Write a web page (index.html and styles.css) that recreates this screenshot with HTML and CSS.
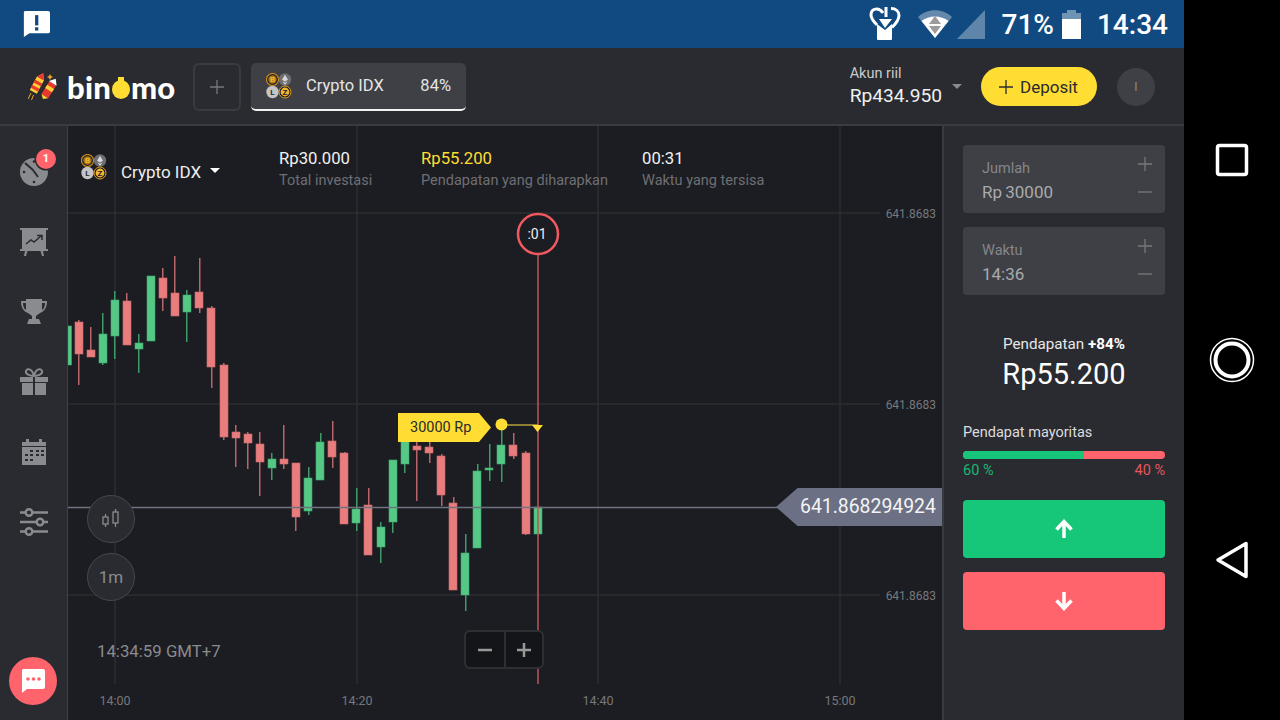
FILE: index.html
```html
<!DOCTYPE html>
<html lang="en">
<head>
    <meta charset="UTF-8">
    <meta name="viewport" content="width=device-width, initial-scale=1.0">
    <title>Binomo</title>
    <link rel="stylesheet" href="styles.css">
</head>
<body>

    <div class="screen">

        <!-- android status bar -->
        <div class="status-bar">
            <svg class="status-note" width="28" height="28" viewBox="0 0 30 30">
                <path d="M3 1h25a2 2 0 0 1 2 2v20a2 2 0 0 1-2 2H8l-6 4V3a2 2 0 0 1 1-2z" fill="#fff"/>
                <rect x="14" y="5.500" width="3.500" height="11" fill="#114a80"/>
                <rect x="14" y="18.500" width="3.500" height="3.500" fill="#114a80"/>
            </svg>
            <div class="status-right">
                <svg width="32" height="34" viewBox="0 0 32 34">
                    <path d="M14 6C10 0 2 1 2 8c0 4 3 7 6 10M17 0v10M22 1.500c5 0 8 3 8 7 0 4-3 8-7 12" fill="none" stroke="#fff" stroke-width="3"/>
                    <path d="M8 17l8 6 7-6v15a1 1 0 0 1-1 1H9a1 1 0 0 1-1-1z" fill="#fff"/>
                    <path d="M10 12h13l-7 9z" fill="#fff"/>
                </svg>
                <svg class="status-wifi" width="36" height="30" viewBox="0 0 36 30">
                    <path d="M18 29L1 8C10-1 26-1 35 8z" fill="#fff" fill-opacity=".35"/>
                    <path d="M18 29L4.500 12C12 6 24 6 31.500 12z" fill="#fff"/>
                    <path d="M18 7l6 8H12zM12 17h12l-6 8z" fill="#9b9b9b"/>
                </svg>
                <svg width="28" height="29" viewBox="0 0 28 29">
                    <path d="M0 29L28 0v29z" fill="#fff" fill-opacity=".33"/>
                </svg>
                <span class="status-text status-batt">71%</span>
                <svg class="status-battery" width="19" height="29" viewBox="0 0 19 29">
                    <path d="M5 0h9v3h5v9H0V3h5z" fill="#fff" fill-opacity=".4"/>
                    <rect y="9" width="19" height="20" fill="#fff"/>
                </svg>
                <span class="status-text status-time">14:34</span>
            </div>
        </div>

        <!-- top bar -->
        <header class="topbar">
            <div class="logo">
                <svg class="rockets" width="30" height="30" viewBox="0 0 30 30">
                    <g transform="rotate(28 10 11)">
                        <path d="M10 0l4 6v15H6V6z" fill="#ffcf33"/>
                        <path d="M10 0l4 6H6zM6 9.500h8v3H6zM6 15.500h8v3H6z" fill="#e8392f"/>
                    </g>
                    <path d="M3 21l-3 6M5.500 23l-2 5" stroke="#f5a623" stroke-width="1"/>
                    <g transform="rotate(32 20 19)">
                        <path d="M16 10h8v15h-8z" fill="#e8392f"/>
                        <path d="M16 14h8v4h-8zM16 25h8l-4 3.500z" fill="#ffcf33"/>
                        <path d="M15.500 10L20 4.500l4.500 5.500z" fill="#fff"/>
                    </g>
                    <path d="M22 2l1 2 2 1-2 1-1 2-1-2-2-1 2-1z" fill="#f5a623"/>
                </svg>
                <span class="logo-text">bin<span class="logo-o">o</span>mo</span>
            </div>
            <button class="tab-add">
                <svg width="16" height="16" viewBox="0 0 16 16"><path d="M8 1v14M1 8h14" stroke="#77787c" stroke-width="1.300"/></svg>
            </button>
            <div class="tab">
                <svg class="tab-coins" width="26" height="26" viewBox="0 0 26 26">
                    <circle cx="6.500" cy="6.500" r="6" fill="#1c1d22" stroke="#c98a1e" stroke-width="1.200"/>
                    <circle cx="6.500" cy="6.500" r="4.200" fill="#a8761c"/>
                    <text x="6.500" y="9.200" class="coin-letter" fill="#f2b632">B</text>
                    <circle cx="19" cy="6.500" r="6.200" fill="#6d6e72"/>
                    <path d="M19 1.800l-3 5 3 1.700 3-1.700zM16.400 8.200l2.600 3.800 2.600-3.800-2.600 1.500z" fill="#d8d8da"/>
                    <circle cx="6.500" cy="19" r="6.200" fill="#c4c5c7"/>
                    <text x="6.500" y="22.200" class="coin-letter" fill="#2a2b30">L</text>
                    <circle cx="19" cy="19" r="6" fill="#1c1d22" stroke="#e0a021" stroke-width="1"/>
                    <circle cx="19" cy="19" r="4.400" fill="#f2b632"/>
                    <text x="19" y="22" class="coin-letter" fill="#1c1d22">Z</text>
                </svg>
                <span class="tab-name">Crypto IDX</span>
                <span class="tab-pct">84%</span>
            </div>
            <div class="account">
                <div class="account-info">
                    <div class="account-type">Akun riil</div>
                    <div class="account-balance">Rp434.950</div>
                </div>
                <span class="caret caret-grey"></span>
            </div>
            <button class="deposit">
                <svg width="16" height="16" viewBox="0 0 16 16"><path d="M8 1v14M1 8h14" stroke="#2a2b30" stroke-width="1.300"/></svg>
                Deposit
            </button>
            <div class="avatar">I</div>
        </header>

        <div class="main">

            <!-- left menu -->
            <nav class="sidebar">
                <div class="side-item">
                    <svg width="30" height="30" viewBox="0 0 30 30">
                        <circle cx="15" cy="15" r="14" fill="#8a8b8f"/>
                        <path d="M14 13L6 6M14 13l5 7" stroke="#2a2b30" stroke-width="2"/>
                        <circle cx="15" cy="25" r="1.300" fill="#2a2b30"/><circle cx="5" cy="15" r="1.300" fill="#2a2b30"/><circle cx="15" cy="4.500" r="1.300" fill="#2a2b30"/>
                    </svg>
                    <span class="side-badge">1</span>
                </div>
                <div class="side-item">
                    <svg width="28" height="28" viewBox="0 0 28 28">
                        <path d="M0 0h28v2H0zM0 21h28v2H0zM5 23h2.500l-1.500 5H4zM20.500 23H23l1 5h-2z" fill="#8a8b8f"/>
                        <path d="M2 2h24v19H2z" fill="#8a8b8f"/>
                        <path d="M6 16l5-4 3 2 7-6M17 7.500h5v4.500" fill="none" stroke="#2a2b30" stroke-width="1.500"/>
                    </svg>
                </div>
                <div class="side-item">
                    <svg width="28" height="28" viewBox="0 0 28 28">
                        <path d="M6 1h16v2h5c0 6-2 10-7 12-1 1-3 2-4 3v3h3l2 5H7l2-5h3v-3c-1-1-3-2-4-3C3 13 1 9 1 3h5zM3 5c0 3 1 6 3 7V5zm19 0v7c2-1 3-4 3-7z" fill="#8a8b8f"/>
                    </svg>
                </div>
                <div class="side-item">
                    <svg width="28" height="28" viewBox="0 0 28 28">
                        <path d="M14 8C10 8 5 6 6 3c1-3 6-3 8 5zM14 8c4 0 9-2 8-5-1-3-6-3-8 5z" fill="none" stroke="#8a8b8f" stroke-width="2"/>
                        <path d="M0 9h13v5H0zM15 9h13v5H15zM2 15h11v12H2zM15 15h11v12H15z" fill="#8a8b8f"/>
                    </svg>
                </div>
                <div class="side-item">
                    <svg width="26" height="26" viewBox="0 0 26 26">
                        <path d="M1 3h4V0h3v3h10V0h3v3h4v23H1z" fill="#8a8b8f"/>
                        <path d="M1 7.500h24" stroke="#2a2b30" stroke-width="1"/>
                        <path d="M9 11h3v2H9zM15 11h3v2h-3zM20 11h3v2h-3zM4 15h3v2H4zM9 15h3v2H9zM15 15h3v2h-3zM20 15h3v2h-3zM4 20h3v2H4zM9 20h3v2H9z" fill="#2a2b30"/>
                    </svg>
                </div>
                <div class="side-item">
                    <svg width="28" height="28" viewBox="0 0 28 28" fill="none" stroke="#8a8b8f" stroke-width="2.400">
                        <path d="M0 4.500h5M13 4.500h15M0 14h16M24 14h4M0 23.500h5M13 23.500h15"/>
                        <circle cx="9" cy="4.500" r="3.300"/><circle cx="20" cy="14" r="3.300"/><circle cx="9" cy="23.500" r="3.300"/>
                    </svg>
                </div>
                <button class="chat">
                    <svg width="26" height="26" viewBox="0 0 26 26">
                        <path d="M3 1h20a2 2 0 0 1 2 2v16a2 2 0 0 1-2 2H7l-5 4V2a2 2 0 0 1 1-1z" fill="#fff"/>
                        <circle cx="8" cy="11" r="1.800" fill="#ff646c"/><circle cx="13.500" cy="11" r="1.800" fill="#ff646c"/><circle cx="19" cy="11" r="1.800" fill="#ff646c"/>
                    </svg>
                </button>
            </nav>

            <!-- chart -->
            <section class="chart">
                <svg class="chart-canvas" width="874" height="594" viewBox="68 126 874 594">
                    <g class="grid">
                        <path d="M115 126V684M357 126V684M598 126V684M840 126V684"/>
                        <path d="M68 213H880M68 404H880M68 595H880"/>
                    </g>

                    <g class="candle-green"><rect class="wick" x="68" y="326" width="1" height="39"/><rect class="body" x="68" y="326" width="3.500" height="39"/></g>
                    <g class="candle-red"><rect class="wick" x="78" y="320" width="1.500" height="65"/><rect class="body" x="75" y="322" width="8" height="32"/></g>
                    <g class="candle-red"><rect class="wick" x="90" y="327" width="1.500" height="30"/><rect class="body" x="87" y="350" width="8" height="7"/></g>
                    <g class="candle-green"><rect class="wick" x="102" y="313" width="1.500" height="52"/><rect class="body" x="99" y="334" width="8" height="29"/></g>
                    <g class="candle-green"><rect class="wick" x="114" y="291" width="1.500" height="68"/><rect class="body" x="111" y="300" width="8" height="36"/></g>
                    <g class="candle-red"><rect class="wick" x="126" y="293" width="1.500" height="52"/><rect class="body" x="123" y="301" width="8" height="44"/></g>
                    <g class="candle-green"><rect class="wick" x="138" y="334" width="1.500" height="39"/><rect class="body" x="135" y="343" width="8" height="6"/></g>
                    <g class="candle-green"><rect class="body" x="147" y="276" width="8" height="65"/></g>
                    <g class="candle-red"><rect class="wick" x="162" y="268" width="1.500" height="43"/><rect class="body" x="159" y="278" width="8" height="20"/></g>
                    <g class="candle-red"><rect class="wick" x="174" y="256" width="1.500" height="60"/><rect class="body" x="171" y="293" width="8" height="23"/></g>
                    <g class="candle-green"><rect class="wick" x="186" y="290" width="1.500" height="52"/><rect class="body" x="183" y="295" width="8" height="17"/></g>
                    <g class="candle-red"><rect class="wick" x="199" y="258" width="1.500" height="55"/><rect class="body" x="195" y="292" width="8" height="16"/></g>
                    <g class="candle-red"><rect class="wick" x="211" y="306" width="1.500" height="82"/><rect class="body" x="207" y="308" width="8" height="59"/></g>
                    <g class="candle-red"><rect class="wick" x="223" y="363" width="1.500" height="77"/><rect class="body" x="220" y="365" width="8" height="72"/></g>
                    <g class="candle-red"><rect class="wick" x="235" y="425" width="1.500" height="42"/><rect class="body" x="232" y="432" width="8" height="6"/></g>
                    <g class="candle-red"><rect class="wick" x="247" y="432" width="1.500" height="37"/><rect class="body" x="244" y="434" width="8" height="9"/></g>
                    <g class="candle-red"><rect class="wick" x="259" y="432" width="1.500" height="64"/><rect class="body" x="256" y="444" width="8" height="18"/></g>
                    <g class="candle-green"><rect class="wick" x="271" y="453" width="1.500" height="27"/><rect class="body" x="268" y="459" width="8" height="9"/></g>
                    <g class="candle-red"><rect class="wick" x="283" y="425" width="1.500" height="44"/><rect class="body" x="280" y="459" width="8" height="5"/></g>
                    <g class="candle-red"><rect class="wick" x="295" y="463" width="1.500" height="68"/><rect class="body" x="292" y="463" width="8" height="54"/></g>
                    <g class="candle-green"><rect class="wick" x="308" y="467" width="1.500" height="48"/><rect class="body" x="304" y="478" width="8" height="33"/></g>
                    <g class="candle-green"><rect class="wick" x="320" y="433" width="1.500" height="47"/><rect class="body" x="316" y="442" width="8" height="38"/></g>
                    <g class="candle-red"><rect class="wick" x="332" y="421" width="1.500" height="47"/><rect class="body" x="328" y="441" width="8" height="16"/></g>
                    <g class="candle-red"><rect class="wick" x="344" y="452" width="1.500" height="72"/><rect class="body" x="340" y="453" width="8" height="71"/></g>
                    <g class="candle-green"><rect class="wick" x="356" y="488" width="1.500" height="43"/><rect class="body" x="352" y="509" width="8" height="14"/></g>
                    <g class="candle-red"><rect class="wick" x="368" y="488" width="1.500" height="67"/><rect class="body" x="364" y="505" width="8" height="50"/></g>
                    <g class="candle-green"><rect class="wick" x="380" y="522" width="1.500" height="41"/><rect class="body" x="377" y="527" width="8" height="20"/></g>
                    <g class="candle-green"><rect class="wick" x="392" y="460" width="1.500" height="73"/><rect class="body" x="389" y="460" width="8" height="62"/></g>
                    <g class="candle-green"><rect class="wick" x="404" y="440" width="1.500" height="33"/><rect class="body" x="401" y="440" width="8" height="24"/></g>
                    <g class="candle-red"><rect class="wick" x="416" y="441" width="1.500" height="60"/><rect class="body" x="413" y="446" width="8" height="4"/></g>
                    <g class="candle-red"><rect class="wick" x="429" y="441" width="1.500" height="22"/><rect class="body" x="425" y="447" width="8" height="6"/></g>
                    <g class="candle-red"><rect class="wick" x="441" y="454" width="1.500" height="52"/><rect class="body" x="437" y="456" width="8" height="39"/></g>
                    <g class="candle-red"><rect class="wick" x="453" y="497" width="1.500" height="93"/><rect class="body" x="449" y="503" width="8" height="87"/></g>
                    <g class="candle-green"><rect class="wick" x="465" y="534" width="1.500" height="77"/><rect class="body" x="461" y="553" width="8" height="42"/></g>
                    <g class="candle-green"><rect class="wick" x="477" y="464" width="1.500" height="84"/><rect class="body" x="473" y="471" width="8" height="77"/></g>
                    <g class="candle-green"><rect class="wick" x="489" y="444" width="1.500" height="37"/><rect class="body" x="485" y="468" width="8" height="2"/></g>
                    <g class="candle-green"><rect class="wick" x="501" y="430" width="1.500" height="52"/><rect class="body" x="497" y="445" width="8" height="19"/></g>
                    <g class="candle-red"><rect class="wick" x="513" y="433" width="1.500" height="26"/><rect class="body" x="509" y="445" width="8" height="11"/></g>
                    <g class="candle-red"><rect class="wick" x="525" y="451" width="1.500" height="84"/><rect class="body" x="522" y="453" width="8" height="81"/></g>
                    <g class="candle-green"><rect class="body" x="534" y="507" width="8" height="27"/></g>

                    <path class="price-line" d="M68 507.500H780"/>
                    <path class="expire-line" d="M538 254V684"/>
                    <circle class="expire-ring" cx="538" cy="234" r="20"/>
                    <path class="bet-line" d="M501 425H538"/>
                    <circle class="bet-dot" cx="501.500" cy="424.500" r="6"/>
                    <path class="bet-dot" d="M532 425h11l-5.500 7z"/>
                </svg>

                <div class="chart-head">
                    <svg class="head-coins" width="26" height="26" viewBox="0 0 26 26">
                        <circle cx="6.500" cy="6.500" r="6" fill="#1c1d22" stroke="#c98a1e" stroke-width="1.200"/>
                        <circle cx="6.500" cy="6.500" r="4.200" fill="#a8761c"/>
                        <text x="6.500" y="9.200" class="coin-letter" fill="#f2b632">B</text>
                        <circle cx="19" cy="6.500" r="6.200" fill="#6d6e72"/>
                        <path d="M19 1.800l-3 5 3 1.700 3-1.700zM16.400 8.200l2.600 3.800 2.600-3.800-2.600 1.500z" fill="#d8d8da"/>
                        <circle cx="6.500" cy="19" r="6.200" fill="#c4c5c7"/>
                        <text x="6.500" y="22.200" class="coin-letter" fill="#2a2b30">L</text>
                        <circle cx="19" cy="19" r="6" fill="#1c1d22" stroke="#e0a021" stroke-width="1"/>
                        <circle cx="19" cy="19" r="4.400" fill="#f2b632"/>
                        <text x="19" y="22" class="coin-letter" fill="#1c1d22">Z</text>
                    </svg>
                    <div class="head-name">Crypto IDX<span class="caret"></span></div>
                    <div class="stat stat-invest">
                        <div class="stat-value">Rp30.000</div>
                        <div class="stat-label">Total investasi</div>
                    </div>
                    <div class="stat stat-income">
                        <div class="stat-value stat-yellow">Rp55.200</div>
                        <div class="stat-label">Pendapatan yang diharapkan</div>
                    </div>
                    <div class="stat">
                        <div class="stat-value">00:31</div>
                        <div class="stat-label">Waktu yang tersisa</div>
                    </div>
                </div>

                <span class="expire-time">:01</span>
                <span class="level level-1">641.8683</span>
                <span class="level level-2">641.8683</span>
                <span class="level level-3">641.8683</span>
                <div class="bet-tag">30000 Rp</div>
                <div class="price-tag">641.868294924</div>

                <button class="round-btn round-type">
                    <svg width="18" height="20" viewBox="0 0 18 20" fill="none" stroke="#8a8b8f" stroke-width="1.300">
                        <rect x="1" y="8" width="5" height="7"/><path d="M3.500 5v3M3.500 15v3"/>
                        <rect x="11" y="3" width="5" height="11"/><path d="M13.500 0v3M13.500 14v4"/>
                    </svg>
                </button>
                <button class="round-btn round-time">1m</button>
                <div class="clock">14:34:59 GMT+7</div>

                <div class="zoom-box">
                    <button class="zoom-btn"><svg width="16" height="16" viewBox="0 0 16 16"><path d="M1 8h14" stroke="#999" stroke-width="2.500"/></svg></button>
                    <button class="zoom-btn"><svg width="16" height="16" viewBox="0 0 16 16"><path d="M8 1v14M1 8h14" stroke="#999" stroke-width="2.500"/></svg></button>
                </div>

                <div class="axis">
                    <span class="tick tick-1">14:00</span>
                    <span class="tick tick-2">14:20</span>
                    <span class="tick tick-3">14:40</span>
                    <span class="tick tick-4">15:00</span>
                </div>
            </section>

            <!-- right panel -->
            <aside class="panel">
                <div class="field">
                    <div>
                        <div class="field-label">Jumlah</div>
                        <div class="field-value">Rp 30000</div>
                    </div>
                    <div class="stepper">
                        <svg width="14" height="14" viewBox="0 0 14 14"><path d="M7 0v14M0 7h14" stroke="#77787c" stroke-width="1.300"/></svg>
                        <svg width="14" height="14" viewBox="0 0 14 14"><path d="M0 7h14" stroke="#77787c" stroke-width="1.300"/></svg>
                    </div>
                </div>
                <div class="field">
                    <div>
                        <div class="field-label">Waktu</div>
                        <div class="field-value">14:36</div>
                    </div>
                    <div class="stepper">
                        <svg width="14" height="14" viewBox="0 0 14 14"><path d="M7 0v14M0 7h14" stroke="#77787c" stroke-width="1.300"/></svg>
                        <svg width="14" height="14" viewBox="0 0 14 14"><path d="M0 7h14" stroke="#77787c" stroke-width="1.300"/></svg>
                    </div>
                </div>

                <div class="payout">Pendapatan <b>+84%</b></div>
                <div class="payout-value">Rp55.200</div>

                <div class="opinion">Pendapat mayoritas</div>
                <div class="opinion-bar"><div class="opinion-fill" style="width: 60%"></div></div>
                <div class="opinion-pct">
                    <span class="pct-up">60 %</span>
                    <span class="pct-down">40 %</span>
                </div>

                <button class="trade trade-up">
                    <svg width="22" height="22" viewBox="0 0 22 22"><path d="M11 20V4M3.500 11.500L11 3.500l7.500 8" fill="none" stroke="#fff" stroke-width="3.500"/></svg>
                </button>
                <button class="trade trade-down">
                    <svg width="22" height="22" viewBox="0 0 22 22"><path d="M11 2v16M3.500 10.500l7.500 8 7.500-8" fill="none" stroke="#fff" stroke-width="3.500"/></svg>
                </button>
            </aside>
        </div>
    </div>

    <!-- android nav buttons -->
    <div class="navbar">
        <div class="nav-slot">
            <svg width="34" height="34" viewBox="0 0 34 34"><rect x="2.500" y="2.500" width="29" height="29" rx="2" fill="none" stroke="#fff" stroke-width="3.500"/></svg>
        </div>
        <div class="nav-slot">
            <svg width="46" height="46" viewBox="0 0 46 46" fill="none" stroke="#fff"><circle cx="23" cy="23" r="21.500" stroke-width="1.500"/><circle cx="23" cy="23" r="16.500" stroke-width="4"/></svg>
        </div>
        <div class="nav-slot">
            <svg width="34" height="38" viewBox="0 0 34 38"><path d="M31 2.500v33L3 19z" fill="none" stroke="#fff" stroke-width="3.500" stroke-linejoin="round"/></svg>
        </div>
    </div>

</body>
</html>
```

FILE: styles.css
```css
/* Base styles */
body {
    font-family: 'Roboto', sans-serif;
    background: #000;
    margin: 0;
    padding: 0;
    display: flex;
    width: 1280px;
    height: 720px;
    overflow: hidden;
    color: #fff;
}

button {
    font-family: inherit;
    cursor: pointer;
    padding: 0;
}

svg {
    display: block;
}

.coin-letter {
    font-family: 'Roboto', sans-serif;
    font-size: 8px;
    font-weight: 700;
    text-anchor: middle;
}

.screen {
    width: 1184px;
    height: 720px;
    display: flex;
    flex-direction: column;
}

/* Status bar */
.status-bar {
    height: 48px;
    background-color: #114a80;
    display: flex;
    align-items: center;
    justify-content: space-between;
    padding: 0 16px 0 22px;
    flex: none;
}

.status-note {
    margin-top: -1px;
}

.status-right {
    display: flex;
    align-items: center;
}

.status-wifi {
    margin: 0 4px 0 16px;
}

.status-text {
    font-size: 28px;
    font-weight: 500;
    line-height: 48px;
    padding-top: 2px;
}

.status-batt {
    margin-left: 17px;
}

.status-battery {
    margin: 0 16px 0 8px;
}

/* Top bar */
.topbar {
    height: 75px;
    background-color: #2a2b30;
    border-bottom: 2px solid #3a3b40;
    display: flex;
    align-items: center;
    padding: 1px 29px 0 28px;
    flex: none;
}

.logo {
    display: flex;
    align-items: center;
    width: 165px;
}

.rockets {
    margin-right: 9px;
}

.logo-text {
    display: flex;
    align-items: center;
    font-family: 'Lato', sans-serif;
    font-size: 31px;
    font-weight: 900;
    line-height: 36px;
    letter-spacing: 0.2px;
}

.logo-o {
    position: relative;
    width: 18px;
    height: 19px;
    margin: 6px 1px 0;
    background-color: #ffdd33;
    border-radius: 50%;
    color: #ffdd33;
    font-size: 16px;
    line-height: 18px;
    text-align: center;
}

.logo-o::before {
    content: "";
    position: absolute;
    top: -3px;
    left: 6px;
    width: 6px;
    height: 5px;
    background-color: #ffdd33;
}

.tab-add {
    width: 48px;
    height: 48px;
    background: none;
    border: 2px solid #3a3b40;
    border-radius: 6px;
    display: flex;
    align-items: center;
    justify-content: center;
}

.tab {
    width: 215px;
    height: 48px;
    margin-left: 10px;
    box-sizing: border-box;
    background-color: #3f4045;
    border-radius: 5px;
    border-bottom: 2px solid #f4f4f4;
    display: flex;
    align-items: center;
    padding: 0 15px 0 15px;
    font-size: 16.500px;
    color: #e4e4e6;
}

.tab-coins {
    margin-right: 14px;
}

.tab-pct {
    margin-left: auto;
}

.account {
    margin-left: auto;
    display: flex;
    align-items: center;
}

.account-type {
    font-size: 14.500px;
    line-height: 18px;
    color: #c9cacc;
}

.account-balance {
    font-size: 19.200px;
    line-height: 26px;
    color: #f0f0f0;
}

.caret {
    display: inline-block;
    width: 0;
    height: 0;
    border-left: 5px solid transparent;
    border-right: 5px solid transparent;
    border-top: 5px solid #fff;
}

.caret-grey {
    border-top-color: #8a8b8f;
    margin: 0 0 1px 10px;
}

.deposit {
    width: 116px;
    height: 39px;
    margin-left: 19px;
    padding-right: 2px;
    background-color: #ffdd33;
    border: none;
    border-radius: 20px;
    color: #2a2b30;
    font-size: 17px;
    display: flex;
    align-items: center;
    justify-content: center;
    gap: 6px;
}

.avatar {
    width: 38px;
    height: 38px;
    margin-left: 20px;
    background-color: #3f4045;
    border-radius: 50%;
    color: #8a8b8f;
    font-size: 12px;
    display: flex;
    align-items: center;
    justify-content: center;
}

/* Main area */
.main {
    flex: 1;
    display: flex;
    min-height: 0;
}

.sidebar {
    box-sizing: border-box;
    background-color: #2a2b30;
    border-right: 1px solid #3f4045;
    width: 68px;
    padding-top: 11px;
    display: flex;
    flex-direction: column;
    align-items: center;
    flex: none;
}

.side-item {
    height: 70px;
    width: 67px;
    flex: none;
    display: flex;
    align-items: center;
    justify-content: center;
    position: relative;
}

.side-badge {
    position: absolute;
    top: 12px;
    left: 36px;
    width: 20px;
    height: 20px;
    border-radius: 50%;
    background-color: #ff646c;
    box-shadow: 0 0 0 1.500px #2a2b30;
    color: #fff;
    font-size: 11px;
    font-weight: 700;
    line-height: 20px;
    text-align: center;
}

.chat {
    margin-top: auto;
    margin-bottom: 15px;
    margin-right: 1px;
    width: 48px;
    height: 48px;
    border: none;
    border-radius: 50%;
    background-color: #ff646c;
    display: flex;
    align-items: center;
    justify-content: center;
}

/* Chart */
.chart {
    position: relative;
    width: 874px;
    background-color: #1c1d22;
    flex: none;
}

.chart-canvas {
    position: absolute;
    top: 0;
    left: 0;
}

.grid path {
    stroke: #2c2d32;
    stroke-width: 1.500;
    fill: none;
}

.candle-red .wick {
    fill: #b9666a;
}

.candle-red .body {
    fill: #e97c7c;
    stroke: #c96a6c;
    stroke-width: 0.600;
}

.candle-green .wick {
    fill: #3f9c68;
}

.candle-green .body {
    fill: #56c885;
    stroke: #3fa56c;
    stroke-width: 0.600;
}

.price-line {
    stroke: #6f7280;
    stroke-width: 1.500;
    fill: none;
}

.expire-line {
    stroke: #b9565c;
    stroke-width: 1.500;
    fill: none;
}

.expire-ring {
    stroke: #f0595f;
    stroke-width: 2.500;
    fill: none;
}

.bet-line {
    stroke: #b5a03c;
    stroke-width: 1.500;
    fill: none;
}

.bet-dot {
    fill: #ffdd33;
}

.chart-head {
    position: relative;
    display: flex;
    padding: 22px 0 0 13px;
}

.head-coins {
    margin: 6px 14px 0 0;
}

.head-name {
    width: 158px;
    font-size: 17px;
    line-height: 22px;
    margin-top: 13px;
    color: #eee;
}

.head-name .caret {
    margin: 0 0 5px 9px;
}

.stat-invest {
    width: 142px;
}

.stat-income {
    width: 221px;
}

.stat-value {
    font-size: 16.700px;
    line-height: 22px;
    color: #f2f2f2;
}

.stat-yellow {
    color: #ffdd33;
}

.stat-label {
    font-size: 14.500px;
    line-height: 21px;
    color: #6e6f74;
}

.expire-time {
    position: absolute;
    left: 449px;
    top: 98px;
    width: 40px;
    text-align: center;
    font-size: 14px;
    line-height: 20px;
    color: #eee;
}

.level {
    position: absolute;
    right: 6px;
    font-size: 12px;
    line-height: 16px;
    color: #77787c;
}

.level-1 { top: 80px; }
.level-2 { top: 271px; }
.level-3 { top: 462px; }

.bet-tag {
    position: absolute;
    left: 330px;
    top: 287px;
    width: 93px;
    height: 29px;
    box-sizing: border-box;
    padding-left: 12px;
    background-color: #ffdd33;
    clip-path: polygon(0 0, 87% 0, 100% 50%, 87% 100%, 0 100%);
    color: #2a2b30;
    font-size: 14.500px;
    line-height: 30px;
}

.price-tag {
    position: absolute;
    right: 0;
    top: 362px;
    width: 142px;
    height: 38px;
    padding-left: 24px;
    background-color: #6b7084;
    clip-path: polygon(0 50%, 13% 0, 100% 0, 100% 100%, 13% 100%);
    color: #f4f4f4;
    font-size: 19.400px;
    line-height: 38px;
}

.round-btn {
    position: absolute;
    left: 19px;
    width: 48px;
    height: 48px;
    border: 1.500px solid #47484d;
    border-radius: 50%;
    background-color: #2a2b30;
    color: #8a8b8f;
    font-size: 17px;
    display: flex;
    align-items: center;
    justify-content: center;
}

.round-type { top: 369px; }
.round-time { top: 427px; }

.clock {
    position: absolute;
    left: 29px;
    top: 514px;
    font-size: 16.800px;
    line-height: 22px;
    color: #8a8b8f;
}

.zoom-box {
    position: absolute;
    left: 396px;
    top: 504px;
    height: 39px;
    display: flex;
    box-sizing: border-box;
    border: 2px solid #2e2f33;
    border-radius: 6px;
    background-color: #141518;
}

.zoom-btn {
    width: 38px;
    background: none;
    border: none;
    display: flex;
    align-items: center;
    justify-content: center;
}

.zoom-btn + .zoom-btn {
    border-left: 2px solid #2e2f33;
}

.tick {
    position: absolute;
    top: 567px;
    width: 50px;
    margin-left: -25px;
    text-align: center;
    font-size: 12.500px;
    line-height: 16px;
    color: #77787c;
}

.tick-1 { left: 47px; }
.tick-2 { left: 289px; }
.tick-3 { left: 530px; }
.tick-4 { left: 772px; }

/* Right panel */
.panel {
    flex: 1;
    background-color: #2a2b30;
    border-left: 2px solid #3a3b40;
    padding: 19px 19px 0;
}

.field {
    height: 68px;
    box-sizing: border-box;
    margin-bottom: 14px;
    padding: 13px 13px 0 19px;
    background-color: #3f4045;
    border-radius: 4px;
    display: flex;
    justify-content: space-between;
}

.field-label {
    font-size: 14.500px;
    line-height: 22px;
    color: #85868a;
}

.field-value {
    font-size: 17px;
    line-height: 22px;
    margin-top: 1px;
    color: #a9aaad;
    word-spacing: -1px;
}

.stepper {
    display: flex;
    flex-direction: column;
    gap: 14px;
    margin-top: -1px;
}

.payout {
    margin-top: 38px;
    text-align: center;
    font-size: 15.200px;
    line-height: 22px;
    color: #e6e6e8;
}

.payout b {
    color: #fff;
}

.payout-value {
    margin-top: 1px;
    text-align: center;
    font-size: 29px;
    line-height: 36px;
}

.opinion {
    margin-top: 31px;
    font-size: 14.500px;
    line-height: 20px;
    color: #dcdcde;
}

.opinion-bar {
    margin-top: 8px;
    height: 8px;
    border-radius: 4px;
    background-color: #ff646c;
    overflow: hidden;
}

.opinion-fill {
    height: 100%;
    background-color: #16c77a;
}

.opinion-pct {
    margin-top: 3px;
    display: flex;
    justify-content: space-between;
    font-size: 14.500px;
    line-height: 18px;
}

.pct-up {
    color: #16b873;
}

.pct-down {
    color: #e5565e;
}

.trade {
    width: 100%;
    height: 58px;
    border: none;
    border-radius: 4px;
    display: flex;
    align-items: center;
    justify-content: center;
}

.trade-up {
    margin-top: 20px;
    background-color: #16c77a;
}

.trade-down {
    margin-top: 14px;
    background-color: #ff646c;
}

/* Android nav */
.navbar {
    width: 96px;
    height: 720px;
    display: flex;
    flex-direction: column;
    justify-content: center;
    flex: none;
}

.nav-slot {
    height: 200px;
    display: flex;
    align-items: center;
    justify-content: center;
}
```
